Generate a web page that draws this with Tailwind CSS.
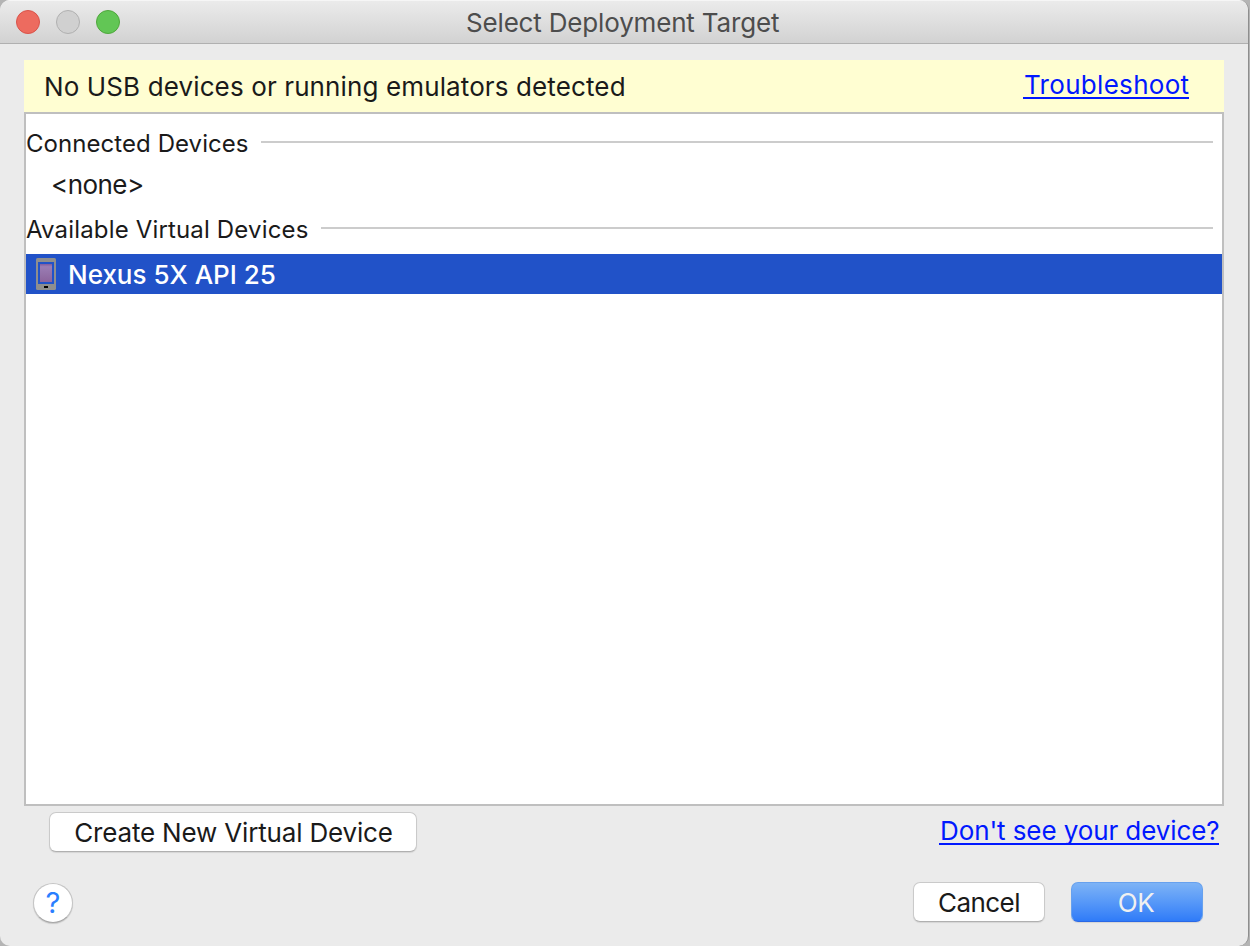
<!DOCTYPE html>
<html lang="en"><head><meta charset="utf-8"><title>Select Deployment Target</title>
<script src="https://cdn.jsdelivr.net/npm/@tailwindcss/browser@4"></script></head>
<body class="w-[1250px] h-[946px] overflow-hidden bg-[#b4b4b4] font-['Inter',sans-serif] text-[26px] leading-8 text-[#1a1a1a] whitespace-nowrap">
<div class="w-[1249px] h-[946px] rounded-[10px] bg-[#ebebeb] border-r border-[#8e8e8e] flex flex-col overflow-hidden">
  <header class="h-11 shrink-0 bg-linear-to-b from-[#ebebeb] to-[#d2d2d2] border-t border-t-[#f6f6f6] border-b border-b-[#b0b0b0] flex items-center pl-4">
    <div class="flex gap-4">
      <span class="size-6 rounded-full bg-[#ed6b5f] border border-[#d9534a]"></span>
      <span class="size-6 rounded-full bg-[#d0d0d0] border border-[#b0b0b0]"></span>
      <span class="size-6 rounded-full bg-[#62c655] border border-[#4fa73c]"></span>
    </div>
    <h1 class="ml-[346px] pt-[2px] tracking-[-0.17px] text-[#4d4d4d]">Select Deployment Target</h1>
  </header>
  <main class="px-6 pt-4 flex flex-col">
    <div class="h-[52px] bg-[#fffed2] flex justify-between items-start pl-5 pr-[35px] pt-[11px]">
      <span class="tracking-[0.12px]">No USB devices or running emulators detected</span>
      <a class="h-[30px] -mt-[2px] pl-px w-[166px] tracking-[0.3px] text-[#0018ff] border-b-2">Troubleshoot</a>
    </div>
    <section class="h-[694px] bg-white border-2 border-[#bfbfbf]">
      <div class="h-[55px] pt-[14px] pr-[9px] flex text-2xl leading-8">
        <h2 class="w-[235px] tracking-[0.06px]">Connected Devices</h2>
        <span class="mt-[13px] h-[2px] flex-1 bg-[#cccccc]"></span>
      </div>
      <div class="h-[45px] pl-[25px] tracking-[-0.55px]">&lt;none&gt;</div>
      <div class="h-10 pr-[9px] flex text-2xl leading-8">
        <h2 class="w-[295px] tracking-[0.16px]">Available Virtual Devices</h2>
        <span class="mt-[13px] h-[2px] flex-1 bg-[#cccccc]"></span>
      </div>
      <div class="h-10 pl-[10px] flex items-center gap-3 bg-[#2152c8] text-white font-medium">
        <svg class="w-5 h-8" viewBox="0 0 20 32">
          <defs><linearGradient id="screen" x2="0" y2="1"><stop stop-color="#805c9e"/><stop offset=".15" stop-color="#9a7db4"/><stop offset="1" stop-color="#8b649c"/></linearGradient></defs>
          <rect width="20" height="32" rx="1.5" fill="#8e8e8e"/>
          <rect x="2" y="4" width="16" height="22" fill="#2152c8"/>
          <rect x="4" y="6" width="12" height="18" fill="url(#screen)"/>
          <rect x="8" y="28" width="4" height="2" fill="#000"/>
        </svg>
        <span class="pt-[2px]">Nexus 5X API 25</span>
      </div>
    </section>
    <div class="h-[47px] pt-[6px] pl-[25px] pr-[5px] flex justify-between items-start">
      <button class="w-[368px] h-10 rounded-[7px] bg-white border border-[#cacaca] border-b-[#b0b0b0] shadow-[0_1px_1px_#00000018] pt-[2px] pl-px tracking-[-0.17px]">Create New Virtual Device</button>
      <a class="mt-[3px] h-[30px] w-[280px] pl-px tracking-[-0.1px] text-[#0018ff] border-b-2">Don't see your device?</a>
    </div>
    <div class="pt-[29px] pl-[9px] pr-[21px] flex items-start">
      <button class="mt-px size-10 rounded-full bg-white border border-[#c4c4c4] border-b-[#a8a8a8] shadow-[0_1px_1px_#00000026] text-[29px] text-[#2a7fff]">?</button>
      <button class="ml-auto w-[132px] h-10 rounded-[7px] bg-white border border-[#cacaca] border-b-[#b0b0b0] shadow-[0_1px_1px_#00000018] pt-[2px] tracking-[-0.55px]">Cancel</button>
      <button class="ml-[26px] w-[132px] h-10 rounded-[7px] bg-linear-to-b from-[#7db3f6] to-[#2f7bf8] border border-[#67a1ee] border-b-[#2a68e6] shadow-[0_1px_1px_#00000018] pt-[2px] pr-[2px] text-[#f0f0f0] tracking-[-0.3px]">OK</button>
    </div>
  </main>
</div>
</body></html>
